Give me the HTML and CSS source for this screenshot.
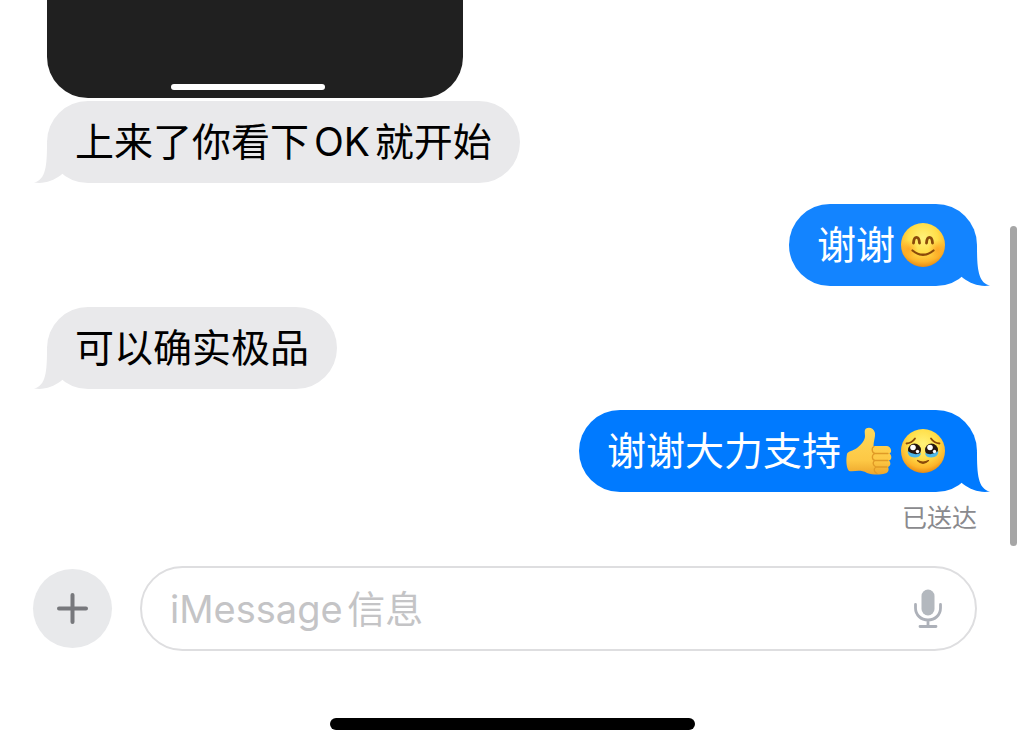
FILE: index.html
```html
<!DOCTYPE html>
<html lang="zh-CN">

<head>
    <meta charset="UTF-8">
    <meta name="viewport" content="width=device-width, initial-scale=1.0">
    <title>iMessage信息</title>
    <link rel="stylesheet" href="styles.css">
</head>

<body>
    <main class="chat">
        <div class="photo">
            <div class="photo-bar"></div>
        </div>
        <div class="message received first">
            上来了你看下OK就开始
            <svg class="tail" viewBox="0 0 36 40" aria-hidden="true"><path d="M13 0C13 22 12 37 0 39.5C10 41 19 38 27 32L36 24V0Z"/></svg>
        </div>
        <div class="message sent light">
            谢谢<svg class="emoji" viewBox="0 0 46 46" role="img" aria-label="微笑">
                <defs>
                    <radialGradient id="face" cx="50%" cy="34%" r="66%">
                        <stop offset="0" stop-color="#fff27a"/>
                        <stop offset="0.5" stop-color="#ffdf4a"/>
                        <stop offset="0.82" stop-color="#fdb52b"/>
                        <stop offset="1" stop-color="#e88a12"/>
                    </radialGradient>
                    <radialGradient id="blush">
                        <stop offset="0" stop-color="#ff8a14" stop-opacity="0.55"/>
                        <stop offset="1" stop-color="#ff8a14" stop-opacity="0"/>
                    </radialGradient>
                </defs>
                <circle cx="24" cy="23" r="22" fill="url(#face)"/>
                <circle cx="10" cy="27" r="9" fill="url(#blush)"/>
                <circle cx="38" cy="27" r="9" fill="url(#blush)"/>
                <path d="M14.500 21C15 13.500 20 13.500 20.500 21M27.500 21C28 13.500 33 13.500 33.500 21" fill="none" stroke="#8a4a0a" stroke-width="2.800" stroke-linecap="round"/>
                <path d="M13.500 28.500Q24 37 34.500 28.500" fill="none" stroke="#8a4a0a" stroke-width="2.200" stroke-linecap="round"/>
            </svg>
            <svg class="tail" viewBox="0 0 36 40" aria-hidden="true"><path d="M13 0C13 22 12 37 0 39.5C10 41 19 38 27 32L36 24V0Z"/></svg>
        </div>
        <div class="message received">
            可以确实极品
            <svg class="tail" viewBox="0 0 36 40" aria-hidden="true"><path d="M13 0C13 22 12 37 0 39.5C10 41 19 38 27 32L36 24V0Z"/></svg>
        </div>
        <div class="message sent">
            谢谢大力支持<svg class="emoji" viewBox="0 0 46 46" role="img" aria-label="赞">
                <defs>
                    <linearGradient id="thumb" x1="0" y1="0" x2="0" y2="1">
                        <stop offset="0" stop-color="#ffd95a"/>
                        <stop offset="0.7" stop-color="#fdc845"/>
                        <stop offset="1" stop-color="#eda62c"/>
                    </linearGradient>
                </defs>
                <path d="M2 26C3 23 8 23 12 20C17 16 20 12 20 8C20 5 19 2 21 0.500C24 -1.500 29 0 30 5C30.500 9 28.500 13 28.500 18H42C47 19 47 25 44.500 25.500C47 27 47 32 44 32.500C46 34.500 46 38 43 39C44.500 42 43 45 40 45.500C35 47 28 47 22 45C15 41 10 44 4 43C1 40 1 31 2 26Z" fill="url(#thumb)"/>
                <path d="M29 18.500C26 20 27 25 30 25.500H43M30 25.500C26 27 27 32 30 32.500H43M30 32.500C27 34 28 38 31 39H42M31 39C28 41 29 44 32 45.500" fill="none" stroke="#e09a26" stroke-width="1.300" stroke-linecap="round"/>
            </svg><svg class="emoji" viewBox="0 0 46 46" role="img" aria-label="含泪">
                <circle cx="24" cy="23" r="22" fill="url(#face)"/>
                <path d="M7.500 15.500Q13 15 16 10.500M40.500 15.500Q35 15 32 10.500" fill="none" stroke="#8a4a0a" stroke-width="1.800" stroke-linecap="round"/>
                <circle cx="15.500" cy="22" r="6.500" fill="#24160f"/>
                <circle cx="32.500" cy="22" r="6.500" fill="#24160f"/>
                <path d="M8.500 23Q15 28 22 25Q21.500 29.500 15.500 29.500Q9 29.500 8.500 23ZM39.500 23Q33 28 26 25Q26.500 29.500 32.500 29.500Q39 29.500 39.500 23Z" fill="#4fb8e8"/>
                <circle cx="14" cy="19.500" r="2.800" fill="#fff"/>
                <circle cx="31" cy="19.500" r="2.800" fill="#fff"/>
                <circle cx="18.500" cy="23.500" r="1.700" fill="#fff"/>
                <circle cx="35.500" cy="23.500" r="1.700" fill="#fff"/>
                <path d="M18.500 32.500Q24 38 29.500 32.500Q24 35.500 18.500 32.500Z" fill="#8a4a0a" stroke="#8a4a0a" stroke-width="1.200" stroke-linejoin="round"/>
            </svg>
            <svg class="tail" viewBox="0 0 36 40" aria-hidden="true"><path d="M13 0C13 22 12 37 0 39.5C10 41 19 38 27 32L36 24V0Z"/></svg>
        </div>
        <div class="status">已送达</div>
    </main>

    <form class="compose">
        <button class="add-button" type="button" aria-label="添加">
            <svg width="31" height="31" viewBox="0 0 31 31"><path d="M15.500 2V29M2 15.500H29" stroke="#77787c" stroke-width="4" stroke-linecap="round"/></svg>
        </button>
        <div class="field">
            <input class="field-input" type="text" placeholder="iMessage信息" aria-label="iMessage信息">
            <button class="mic-button" type="button" aria-label="听写">
                <svg width="28" height="40" viewBox="0 0 28 40">
                    <rect x="7.500" y="0.500" width="13" height="26" rx="6.500" fill="#b3b8be"/>
                    <path d="M1.500 15.500V19C1.500 26 7 31 14 31S26.500 26 26.500 19V15.500M14 31V37.500M6 37.500H22" fill="none" stroke="#adb1b9" stroke-width="2.800" stroke-linecap="round"/>
                </svg>
            </button>
        </div>
    </form>
    <div class="home-bar"></div>
    <div class="scroll-thumb"></div>
</body>

</html>
```

FILE: styles.css
```css
* {
    box-sizing: border-box;
}

body {
    margin: 0;
    background-color: #fff;
    color: #000;
    font-family: Inter, "Noto Sans CJK SC", sans-serif;
    font-size: 39px;
    text-autospace: normal;
}

.chat {
    display: flex;
    flex-direction: column;
    padding: 0 47px;
}

.photo {
    display: flex;
    align-items: flex-end;
    justify-content: center;
    width: 416px;
    max-width: 100%;
    height: 98px;
    padding: 0 14px 8px 0;
    background-color: #202020;
    border-radius: 0 0 41px 41px;
}

.photo-bar {
    width: 154px;
    height: 6px;
    background-color: #fff;
    border-radius: 3px;
}

.message {
    position: relative;
    display: flex;
    align-items: center;
    min-height: 82px;
    padding: 0 28px;
    margin-top: 21px;
    border-radius: 41px;
    line-height: 56px;
}

.message.first {
    margin-top: 3px;
}

.received {
    align-self: flex-start;
    background-color: #e9e9eb;
    color: #000;
}

.sent {
    align-self: flex-end;
    background-color: #007aff;
    color: #fff;
}

.sent.light {
    background-color: #1384ff;
}

/* little hook in the bottom corner of a bubble */
.tail {
    position: absolute;
    bottom: 0;
    width: 36px;
    height: 40px;
}

.received .tail {
    left: -13px;
    fill: #e9e9eb;
}

.sent .tail {
    right: -13px;
    fill: #007aff;
    transform: scaleX(-1);
}

.sent.light .tail {
    fill: #1384ff;
}

.emoji {
    width: 46px;
    height: 46px;
    margin: 0 4px;
    overflow: visible;
}

.status {
    align-self: flex-end;
    margin-top: 8px;
    color: #8a8a8e;
    font-size: 25px;
    line-height: 36px;
}

.compose {
    display: flex;
    align-items: center;
    gap: 28px;
    margin-top: 30px;
    padding: 0 47px 0 33px;
}

.add-button {
    display: flex;
    align-items: center;
    justify-content: center;
    width: 79px;
    height: 79px;
    padding: 0;
    border: none;
    border-radius: 50%;
    background-color: #e8e9eb;
    cursor: pointer;
}

.field {
    flex: 1;
    display: flex;
    align-items: center;
    height: 85px;
    padding: 0 33px 0 28px;
    border: 2px solid #dedee0;
    border-radius: 43px;
}

.field-input {
    flex: 1;
    min-width: 0;
    height: 60px;
    padding: 0;
    border: none;
    outline: none;
    background: none;
    font: inherit;
    font-size: 38px;
    text-autospace: normal;
}

.field-input::placeholder {
    color: #c4c4c6;
    opacity: 1;
}

.mic-button {
    display: flex;
    padding: 0;
    border: none;
    background: none;
    cursor: pointer;
}

.home-bar {
    width: 365px;
    height: 12px;
    margin: 67px auto 18px;
    background-color: #000;
    border-radius: 6px;
}

.scroll-thumb {
    position: absolute;
    top: 226px;
    right: 7px;
    width: 7px;
    height: 320px;
    background-color: #a6a6a6;
    border-radius: 4px;
}
```
